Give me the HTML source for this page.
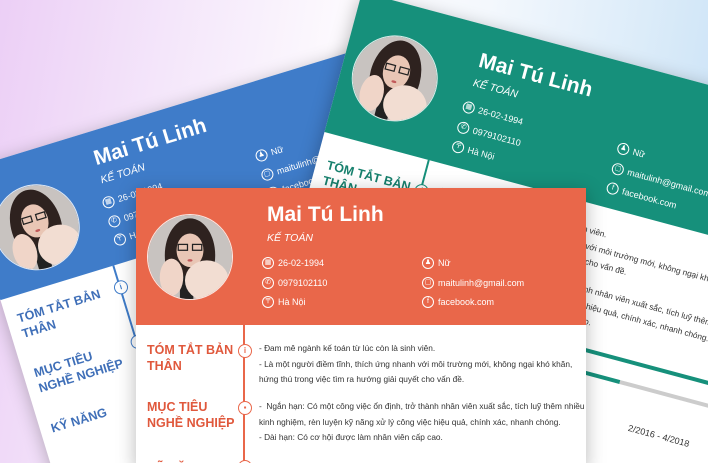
<!DOCTYPE html>
<html><head><meta charset="utf-8">
<style>
*{margin:0;padding:0;box-sizing:border-box}
html,body{width:708px;height:463px;overflow:hidden}
#w{position:absolute;left:0;top:0;width:708px;height:463px;overflow:hidden;font-family:"Liberation Sans",Arial,sans-serif;
background:linear-gradient(100deg,#eccff6 0%,#f4e6fa 22%,#fdfbfe 45%,#f4f8fd 62%,#dcecf9 82%,#c6e0f6 100%);}
.card{position:absolute;width:450px;height:520px;background:#fff;transform-origin:0 0;box-shadow:0 4px 18px rgba(0,0,0,.28)}
.hd{position:absolute;left:0;top:0;width:100%;height:137px}
.ph{position:absolute;left:11px;top:26px;width:86px;height:86px;border-radius:50%;overflow:hidden;border:1.5px solid rgba(255,255,255,.85)}
.ph svg{display:block;width:100%;height:100%}
.nm{position:absolute;left:131px;top:15px;color:#fff;font-weight:bold;font-size:21px;white-space:nowrap}
.jb{position:absolute;left:131px;top:44px;color:#fff;font-style:italic;font-size:10.5px}
.ct{position:absolute;color:#fff;font-size:9px;white-space:nowrap;height:14px;line-height:14px;padding-left:16px}
.ct i{position:absolute;left:0;top:1px;width:12px;height:12px;border:1.2px solid #fff;border-radius:50%;font-style:normal;font-size:7px;line-height:10px;text-align:center}
.ln{position:absolute;left:107px;top:137px;width:2px;height:400px}
.ti{position:absolute;left:11px;font-weight:bold;font-size:12.5px;line-height:16px}
.ic{position:absolute;left:102px;width:14px;height:14px;border-radius:50%;background:#fff;border:1.3px solid;font-size:8px;line-height:11px;text-align:center;font-weight:bold}
.tx{position:absolute;left:123px;font-size:8.3px;line-height:15.5px;color:#333;white-space:nowrap}
</style></head><body><div id="w">

<!-- BLUE -->
<div class="card" style="left:-39px;top:171px;transform:rotate(-17deg);width:470px;height:360px">
 <div class="hd" style="background:#3f7cc9;height:135px"></div>
 <div class="ph" style="left:13px;top:33px"><svg viewBox="0 0 100 100"><rect width="100" height="100" fill="#c8c3c0"/><ellipse cx="50" cy="48" rx="30" ry="44" fill="#2e221f"/><ellipse cx="50" cy="42" rx="16" ry="20" fill="#e9c6b5"/><rect x="36" y="35" width="11" height="7" fill="none" stroke="#222" stroke-width="1.5"/><rect x="53" y="35" width="11" height="7" fill="none" stroke="#222" stroke-width="1.5"/><ellipse cx="50" cy="54" rx="3" ry="1.5" fill="#c25a5a"/><rect x="38" y="72" width="16" height="30" fill="#222"/><ellipse cx="28" cy="74" rx="14" ry="22" fill="#f0d5c8"/><ellipse cx="70" cy="78" rx="26" ry="24" fill="#f2ddd2"/></svg></div>
 <div class="nm" style="top:16px">Mai Tú Linh</div>
 <div class="jb">KẾ TOÁN</div>
 <div class="ct" style="left:126px;top:66px"><i>▦</i>26-02-1994</div>
 <div class="ct" style="left:126px;top:86px"><i>✆</i>0979102110</div>
 <div class="ct" style="left:126px;top:105px"><i>〒</i>Hà Nội</div>
 <div class="ct" style="left:286px;top:66px"><i>♟</i>Nữ</div>
 <div class="ct" style="left:286px;top:86px"><i>▢</i>maitulinh@gmail.com</div>
 <div class="ct" style="left:286px;top:105px"><i>f</i>facebook.com</div>
 <div class="ln" style="background:#3f7cc9;left:117px;top:135px"></div>
 <div class="ti" style="color:#3f6fb8;top:150px">TÓM TẮT BẢN<br>THÂN</div>
 <div class="ti" style="color:#3f6fb8;top:207px">MỤC TIÊU<br>NGHỀ NGHIỆP</div>
 <div class="ti" style="color:#3f6fb8;top:265px">KỸ NĂNG</div>
 <div class="ic" style="border-color:#3f7cc9;color:#3f7cc9;left:112px;top:151px">i</div>
 <div class="ic" style="border-color:#3f7cc9;color:#3f7cc9;left:112px;top:208px">▪</div>
</div>

<!-- GREEN -->
<div class="card" style="left:362px;top:-8px;transform:rotate(15deg);width:470px;height:420px">
 <div class="hd" style="background:#16907b;height:145px"></div>
 <div class="ph" style="top:32px"><svg viewBox="0 0 100 100"><rect width="100" height="100" fill="#c8c3c0"/><ellipse cx="50" cy="48" rx="30" ry="44" fill="#2e221f"/><ellipse cx="50" cy="42" rx="16" ry="20" fill="#e9c6b5"/><rect x="36" y="35" width="11" height="7" fill="none" stroke="#222" stroke-width="1.5"/><rect x="53" y="35" width="11" height="7" fill="none" stroke="#222" stroke-width="1.5"/><ellipse cx="50" cy="54" rx="3" ry="1.5" fill="#c25a5a"/><rect x="38" y="72" width="16" height="30" fill="#222"/><ellipse cx="28" cy="74" rx="14" ry="22" fill="#f0d5c8"/><ellipse cx="70" cy="78" rx="26" ry="24" fill="#f2ddd2"/></svg></div>
 <div class="nm" style="top:24px">Mai Tú Linh</div>
 <div class="jb" style="top:53px">KẾ TOÁN</div>
 <div class="ct" style="left:127px;top:77px"><i>▦</i>26-02-1994</div>
 <div class="ct" style="left:127px;top:98px"><i>✆</i>0979102110</div>
 <div class="ct" style="left:127px;top:118px"><i>〒</i>Hà Nội</div>
 <div class="ct" style="left:287px;top:77px"><i>♟</i>Nữ</div>
 <div class="ct" style="left:287px;top:98px"><i>▢</i>maitulinh@gmail.com</div>
 <div class="ct" style="left:287px;top:118px"><i>f</i>facebook.com</div>
 <div class="ln" style="background:#16907b;top:145px"></div>
 <div class="ti" style="color:#16806d;top:168px">TÓM TẮT BẢN<br>THÂN</div>
 <div class="ic" style="border-color:#16907b;color:#16907b;top:170px">i</div>
 <div class="tx" style="top:164px">- Đam mê ngành kế toán từ lúc còn là sinh viên.<br>- Là một người điềm tĩnh, thích ứng nhanh với môi trường mới, không ngại khó khăn,<br>hứng thú trong việc tìm ra hướng giải quyết cho vấn đề.</div>
 <div class="tx" style="top:222px">- Ngắn hạn: Có một công việc ổn định, trở thành nhân viên xuất sắc, tích luỹ thêm nhiều<br>kinh nghiệm, rèn luyện kỹ năng xử lý công việc hiệu quả, chính xác, nhanh chóng.<br>- Dài hạn: Có cơ hội được làm nhân viên cấp cao.</div>
 <div style="position:absolute;left:150px;top:286px;width:320px;height:4px;background:#16907b"></div>
 <div style="position:absolute;left:150px;top:308px;width:200px;height:4px;background:#16907b"></div>
 <div style="position:absolute;left:350px;top:308px;width:120px;height:4px;background:#ccc"></div>
 <div class="tx" style="left:370px;top:345px;font-size:9px">2/2016 - 4/2018</div>
</div>

<!-- ORANGE -->
<div class="card" style="left:136px;top:188px;height:280px">
 <div class="hd" style="background:#e9674a"></div>
 <div class="ph"><svg viewBox="0 0 100 100"><rect width="100" height="100" fill="#c8c3c0"/><ellipse cx="50" cy="48" rx="30" ry="44" fill="#2e221f"/><ellipse cx="50" cy="42" rx="16" ry="20" fill="#e9c6b5"/><rect x="36" y="35" width="11" height="7" fill="none" stroke="#222" stroke-width="1.5"/><rect x="53" y="35" width="11" height="7" fill="none" stroke="#222" stroke-width="1.5"/><ellipse cx="50" cy="54" rx="3" ry="1.5" fill="#c25a5a"/><rect x="38" y="72" width="16" height="30" fill="#222"/><ellipse cx="28" cy="74" rx="14" ry="22" fill="#f0d5c8"/><ellipse cx="70" cy="78" rx="26" ry="24" fill="#f2ddd2"/></svg></div>
 <div class="nm">Mai Tú Linh</div>
 <div class="jb">KẾ TOÁN</div>
 <div class="ct" style="left:126px;top:68px"><i>▦</i>26-02-1994</div>
 <div class="ct" style="left:126px;top:88px"><i>✆</i>0979102110</div>
 <div class="ct" style="left:126px;top:107px"><i>〒</i>Hà Nội</div>
 <div class="ct" style="left:286px;top:68px"><i>♟</i>Nữ</div>
 <div class="ct" style="left:286px;top:88px"><i>▢</i>maitulinh@gmail.com</div>
 <div class="ct" style="left:286px;top:107px"><i>f</i>facebook.com</div>
 <div class="ln" style="background:#e9674a"></div>
 <div class="ti" style="color:#e0583c;top:154px">TÓM TẮT BẢN<br>THÂN</div>
 <div class="ti" style="color:#e0583c;top:211px">MỤC TIÊU<br>NGHỀ NGHIỆP</div>
 <div class="ti" style="color:#e0583c;top:272px">KỸ NĂNG</div>
 <div class="ic" style="border-color:#e9674a;color:#e9674a;top:156px">i</div>
 <div class="ic" style="border-color:#e9674a;color:#e9674a;top:213px">▪</div>
 <div class="ic" style="border-color:#e9674a;color:#e9674a;top:272px"></div>
 <div class="tx" style="top:153px">- Đam mê ngành kế toán từ lúc còn là sinh viên.<br>- Là một người điềm tĩnh, thích ứng nhanh với môi trường mới, không ngại khó khăn,<br>hứng thú trong việc tìm ra hướng giải quyết cho vấn đề.</div>
 <div class="tx" style="top:211px">- &nbsp;Ngắn hạn: Có một công việc ổn định, trở thành nhân viên xuất sắc, tích luỹ thêm nhiều<br>kinh nghiệm, rèn luyện kỹ năng xử lý công việc hiệu quả, chính xác, nhanh chóng.<br>- Dài hạn: Có cơ hội được làm nhân viên cấp cao.</div>
</div>
</div></body></html>
